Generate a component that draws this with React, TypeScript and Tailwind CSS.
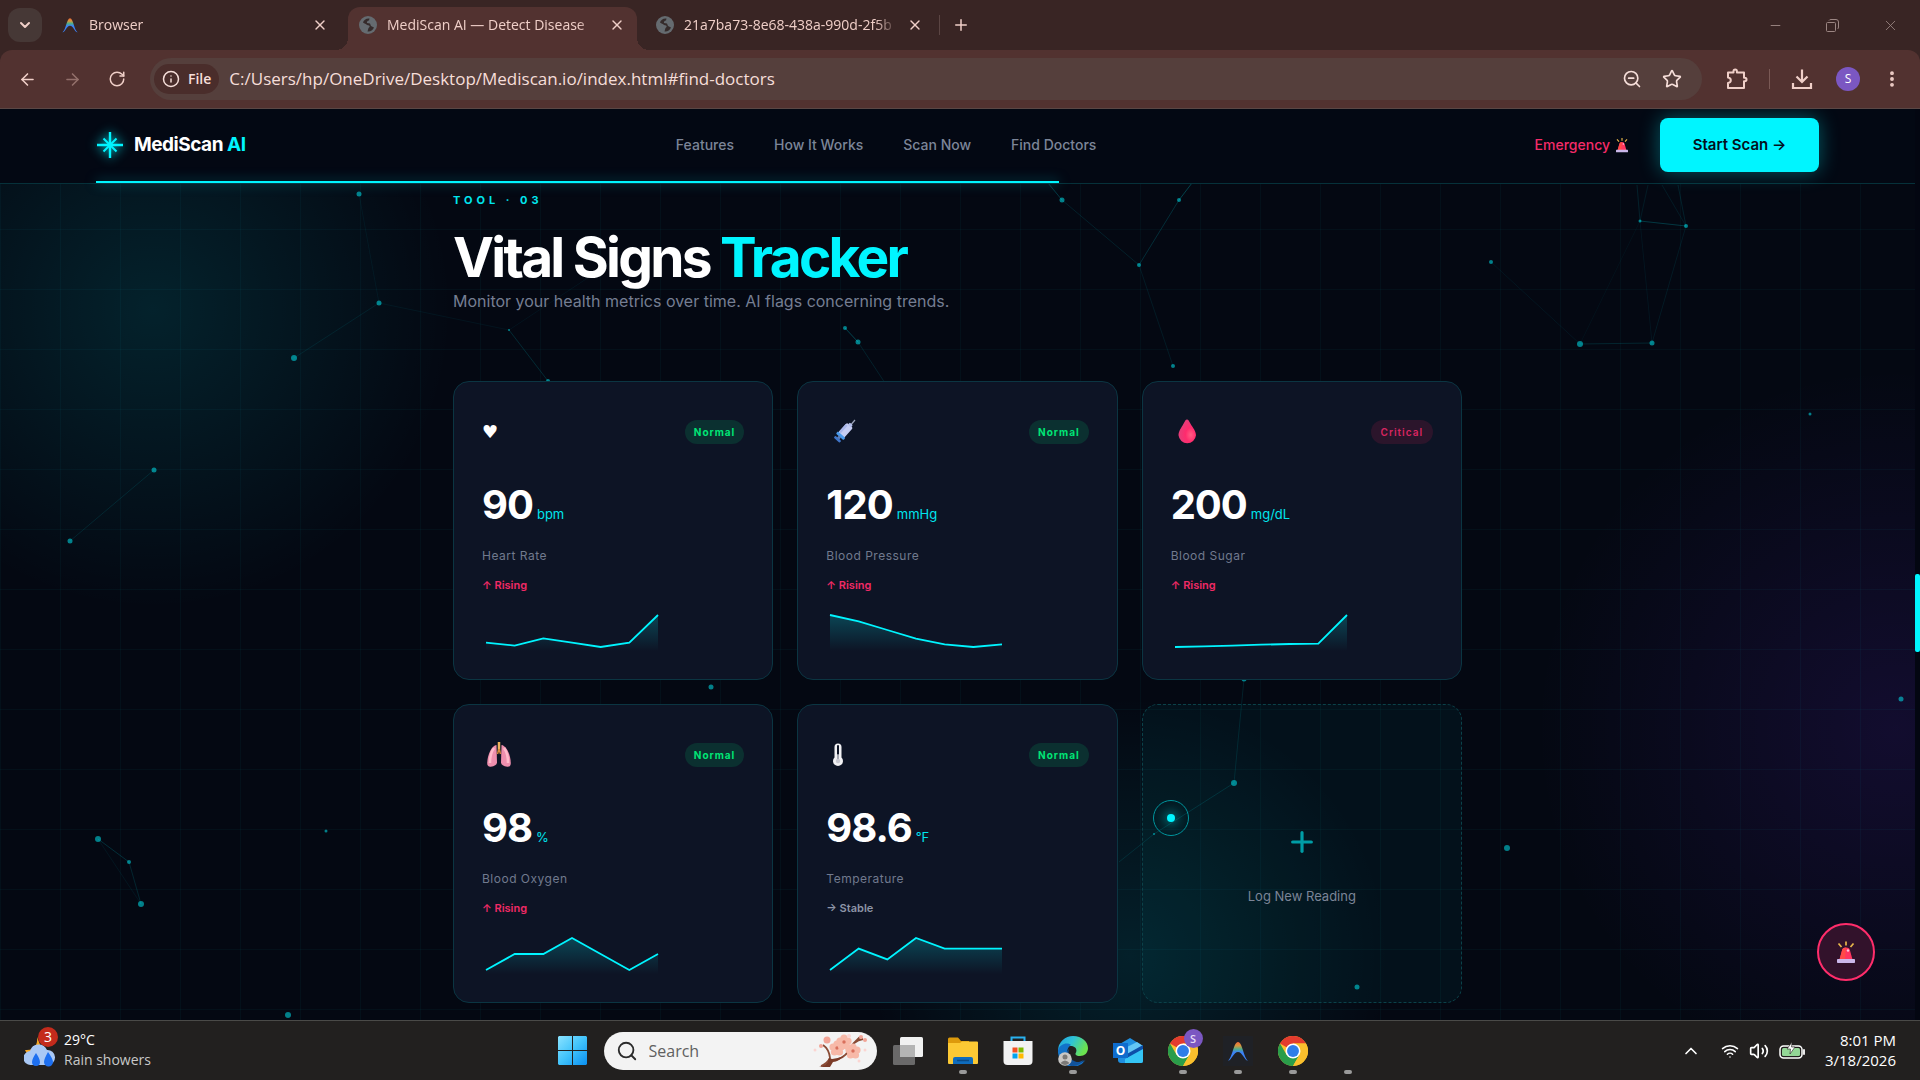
import type { ReactNode } from 'react';
import {
  ArrowLeft,
  ArrowRight,
  ChevronDown,
  ChevronUp,
  Info,
  Minus,
  MoreVertical,
  Plus,
  RotateCw,
  Search,
  Star,
  Volume2,
  Wifi,
  X,
  ZoomOut,
} from 'lucide-react';

type Vital = {
  icon: ReactNode;
  status: 'Normal' | 'Critical';
  value: string;
  unit: string;
  label: string;
  trend: 'Rising' | 'Stable';
  points: number[];
};

// x, y, radius
const PARTICLES: [number, number, number][] = [
  [359, 85, 2.5], [379, 194, 2.5], [294, 249, 3], [154, 361, 2.5], [70, 432, 2.5],
  [98, 730, 3], [129, 753, 2], [141, 795, 3], [326, 722, 1.5], [288, 906, 3],
  [509, 221, 1], [548, 272, 2], [845, 219, 2], [858, 233, 2.5], [711, 578, 2.5],
  [1062, 91, 2.5], [1139, 156, 2], [1179, 91, 2], [1173, 257, 2], [1491, 153, 2],
  [1580, 235, 3], [1652, 234, 2.5], [1686, 117, 2], [1640, 112, 1.5], [1810, 305, 1.5],
  [1901, 590, 2.5], [1507, 739, 3], [1244, 570, 2.5], [1234, 674, 3], [1357, 878, 2.5],
  [1154, 725, 1], [630, 141, 2],
];

const LINKS: [number, number, number, number, number][] = [
  [359, 85, 379, 194, 0.05], [379, 194, 294, 249, 0.08], [379, 194, 509, 221, 0.05],
  [154, 361, 70, 432, 0.1], [98, 730, 129, 753, 0.16], [129, 753, 141, 795, 0.12],
  [98, 730, 141, 795, 0.06], [509, 221, 548, 272, 0.14], [509, 221, 630, 141, 0.05],
  [845, 219, 858, 233, 0.25], [858, 233, 885, 274, 0.1], [1062, 91, 1139, 156, 0.1],
  [1179, 91, 1139, 156, 0.16], [1062, 91, 1048, 74, 0.2], [1179, 91, 1192, 74, 0.24],
  [1139, 156, 1173, 257, 0.08], [1580, 235, 1652, 234, 0.12], [1491, 153, 1580, 235, 0.06],
  [1652, 234, 1686, 117, 0.08], [1652, 234, 1640, 112, 0.06], [1580, 235, 1640, 112, 0.04],
  [1640, 112, 1686, 117, 0.2], [1686, 117, 1678, 76, 0.1], [1686, 117, 1662, 76, 0.08],
  [1640, 112, 1637, 76, 0.1], [1640, 112, 1648, 76, 0.08], [1244, 570, 1234, 674, 0.1],
  [1234, 674, 1154, 725, 0.12], [1154, 725, 1119, 753, 0.1],
];

function SirenIcon({ className }: { className?: string }) {
  return (
    <svg className={className} viewBox="0 0 24 24" fill="none" aria-hidden="true">
      <path d="M12 1.500v4M4.500 3.500l3 3.500M19.500 3.500l-3 3.500" stroke="#e9b84b" strokeWidth="1.700" />
      <path d="M8 10.500q.3-3 4-3t4 3l2.500 9h-13z" fill="#ff3560" />
      <path d="M8 10.500q.3-3 4-3l-1 12H5.500z" fill="#ff4a48" />
      <circle cx="14" cy="10.500" r="1.200" fill="#ffc9dd" />
      <rect x="3" y="19" width="18" height="4" rx=".8" fill="#cbb7ea" />
    </svg>
  );
}

function SyringeIcon() {
  return (
    <svg className="ml-1 size-7" viewBox="0 0 28 28" aria-hidden="true">
      <path d="M19 9l6-7" stroke="#9aa3b8" strokeWidth="1.200" />
      <g transform="rotate(42 14 14)">
        <rect x="10" y="5" width="8" height="14" rx="1.500" fill="#c5cdf3" />
        <rect x="12" y="3" width="4" height="3" rx="1" fill="#b4bfea" />
        <rect x="10" y="7" width="2.500" height="10" fill="#a9b6ea" />
        <rect x="9" y="17.500" width="10" height="3" rx="1" fill="#4a9bec" />
        <rect x="12.500" y="20" width="3" height="3" fill="#5f7fb8" />
        <rect x="10" y="22.500" width="8" height="2.500" rx="1" fill="#3f75c8" />
      </g>
    </svg>
  );
}

function DropIcon() {
  return (
    <svg className="ml-1 size-7" viewBox="0 0 28 28" aria-hidden="true">
      <defs>
        <radialGradient id="drop" cx=".7" cy=".65" r=".6">
          <stop offset="0" stopColor="#ff5c83" />
          <stop offset=".5" stopColor="#ff2b6d" />
          <stop offset="1" stopColor="#e93a78" />
        </radialGradient>
      </defs>
      <path d="M12 1.500c1.300 0 2 1.500 3.500 4.200C17.700 9.500 21 13 21 17.300a8.800 8.800 0 0 1-17.500 0c0-4.300 3-7.800 5-11.600C10 3 10.700 1.500 12 1.500z" fill="url(#drop)" />
    </svg>
  );
}

function LungsIcon() {
  return (
    <svg className="ml-1 size-7" viewBox="0 0 28 28" aria-hidden="true">
      <path d="M10.500 4C6 4.500 1.500 13 1.200 22q0 4 3.500 3.800 5.800-1 6.300-4z" fill="#ef8fae" />
      <path d="M15.500 4C20 4.500 24.500 13 24.800 22q0 4-3.500 3.800-5.800-1-6.300-4z" fill="#ef8fae" />
      <path d="M8 7C5 11 4 17 4 22M18 7c3 4 4 10 4 15" stroke="#ffbccb" strokeWidth="2.500" fill="none" />
      <path d="M13 1v10" stroke="#f0b45c" strokeWidth="2.500" />
      <path d="M13 8l-1.500 5m1.500-5l1.500 5" stroke="#d98a3a" strokeWidth="1.500" />
    </svg>
  );
}

function ThermometerIcon() {
  return (
    <svg className="size-7" viewBox="0 0 28 28" aria-hidden="true">
      <path d="M8.500 6a3.500 3.500 0 0 1 7 0v10.500a5 5 0 1 1-7 0z" fill="#f1f1f4" />
      <path d="M12 5v8" stroke="#0d1425" strokeWidth="2" strokeLinecap="round" />
      <path d="M12 13v6" stroke="#8b8f9b" strokeWidth="1.500" />
      <circle cx="12" cy="20" r="2.200" fill="#c9cad2" />
    </svg>
  );
}

const VITALS: Vital[] = [
  {
    icon: <span className="font-['DejaVu_Sans',sans-serif] text-lg text-white">♥</span>,
    status: 'Normal', value: '90', unit: 'bpm', label: 'Heart Rate', trend: 'Rising',
    points: [31.6, 34.6, 27.3, 31.6, 36, 31.6, 4],
  },
  {
    icon: <SyringeIcon />,
    status: 'Normal', value: '120', unit: 'mmHg', label: 'Blood Pressure', trend: 'Rising',
    points: [4, 10.3, 19, 27.6, 33.3, 36, 33.3],
  },
  {
    icon: <DropIcon />,
    status: 'Critical', value: '200', unit: 'mg/dL', label: 'Blood Sugar', trend: 'Rising',
    points: [36, 35.4, 34.6, 33.7, 33, 32.6, 4],
  },
  {
    icon: <LungsIcon />,
    status: 'Normal', value: '98', unit: '%', label: 'Blood Oxygen', trend: 'Rising',
    points: [36, 20, 20, 4, 20, 36, 20],
  },
  {
    icon: <ThermometerIcon />,
    status: 'Normal', value: '98.6', unit: '°F', label: 'Temperature', trend: 'Stable',
    points: [36, 14.6, 25.4, 4, 14.6, 14.6, 14.6],
  },
];

function Sparkline({ points, id }: { points: number[]; id: string }) {
  const step = 172 / (points.length - 1);
  const line = points.map((y, i) => `${4 + i * step},${y}`).join(' ');
  return (
    <svg className="mt-4 block h-10 w-[180px]" viewBox="0 0 180 40" aria-hidden="true">
      <defs>
        <linearGradient id={id} x1="0" y1="0" x2="0" y2="1">
          <stop offset="0" stopColor="#00f5ff" stopOpacity=".22" />
          <stop offset="1" stopColor="#00f5ff" stopOpacity="0" />
        </linearGradient>
      </defs>
      <polygon points={`4,40 ${line} 176,40`} fill={`url(#${id})`} />
      <polyline points={line} fill="none" stroke="#00f5ff" strokeWidth="1.800" />
    </svg>
  );
}

function VitalCard({ vital, id }: { vital: Vital; id: string }) {
  return (
    <article className="rounded-2xl border border-[#0b3542] bg-[#0d1425] p-7">
      <div className="flex h-11 items-center justify-between">
        {vital.icon}
        <span
          className={
            vital.status === 'Normal'
              ? 'rounded-full bg-[#0b3030] px-[9px] text-[10px] leading-6 font-bold tracking-[1px] text-[#00e676]'
              : 'rounded-full bg-[#2b152b] px-[10px] text-[10px] leading-6 font-semibold tracking-[1px] text-[#d92561]'
          }
        >
          {vital.status}
        </span>
      </div>
      <p className="mt-[18px] flex h-[66px] items-center">
        <span className="flex items-baseline gap-1">
          <span className="text-[40px] leading-[66px] font-bold tracking-tight text-white">{vital.value}</span>
          <span className="text-[13px] text-[#00e5ee]">{vital.unit}</span>
        </span>
      </p>
      <p className="mt-2 text-xs leading-5 tracking-[0.5px] text-[#717a8e]">{vital.label}</p>
      <p
        className={
          vital.trend === 'Rising'
            ? 'mt-[9px] text-[11px] leading-5 font-semibold text-[#f02a66]'
            : 'mt-[9px] text-[11px] leading-5 font-semibold text-[#8d95a8]'
        }
      >
        {vital.trend === 'Rising' ? '↑' : '→'} {vital.trend}
      </p>
      <Sparkline points={vital.points} id={id} />
    </article>
  );
}

function ArcIcon({ className }: { className?: string }) {
  return (
    <svg className={className} viewBox="0 0 24 24" fill="none" aria-hidden="true">
      <defs>
        <linearGradient id="arc" x1="0" y1="0" x2="0" y2="1">
          <stop offset="0" stopColor="#ef6a3a" />
          <stop offset=".2" stopColor="#d8963c" />
          <stop offset=".38" stopColor="#4fae8a" />
          <stop offset=".55" stopColor="#3b82f6" />
          <stop offset="1" stopColor="#3b82f6" />
        </linearGradient>
      </defs>
      <path d="M2 21.500C6.500 19 7.500 3 12 3s5.500 16 10 18.500c-3 1-5.500-8.500-10-8.500S5 22.500 2 21.500z" fill="url(#arc)" />
    </svg>
  );
}

function GlobeIcon() {
  return (
    <svg className="size-[18px] shrink-0" viewBox="0 0 18 18" aria-hidden="true">
      <circle cx="9" cy="9" r="9" fill="#656b70" />
      <path d="M10.500 2.500c-3-.5-6 1.500-6.500 4 1.500 1.500 3 1 4 2.500l2 .5q1.500 1-.5 2.500l-1 3.500q4.500.5 6.500-4l-3-1.500-1-2.500-3-.5q-.5-2 2-2.500z" fill="#352b2b" />
    </svg>
  );
}

function ChromeIcon() {
  return (
    <svg className="size-[30px]" viewBox="0 0 48 48" aria-hidden="true">
      <circle cx="24" cy="24" r="24" fill="#fbc02d" />
      <path d="M24 24L3.200 12A24 24 0 0 1 44.800 12H24z" fill="#e33b2e" />
      <path d="M3.200 12A24 24 0 0 0 24 48l10.400-18L24 24 13.600 30z" fill="#2a9d4a" />
      <path d="M24 12h20.800A24 24 0 0 1 24 48l10.400-18z" fill="#fbc02d" />
      <circle cx="24" cy="24" r="12" fill="#fff" />
      <circle cx="24" cy="24" r="9.500" fill="#2f7de9" />
    </svg>
  );
}

function BrowserTab({ title, icon, className }: { title: string; icon: ReactNode; className: string }) {
  return (
    <div className={`flex items-center gap-[10px] ${className}`}>
      {icon}
      <span className="min-w-0 flex-1 mask-r-from-90% whitespace-nowrap">{title}</span>
      <button aria-label={`Close ${title}`}>
        <X className="size-4" />
      </button>
    </div>
  );
}

function BrowserChrome() {
  return (
    <div className="bg-[#392524] font-['Open_Sans','Noto_Sans',sans-serif] text-[#f0cfc8]">
      <div className="flex h-[50px] items-center text-sm">
        <button aria-label="Search tabs" className="ml-2 flex size-[34px] items-center justify-center rounded-xl bg-[#463836]">
          <ChevronDown className="size-4" strokeWidth={3} />
        </button>
        <BrowserTab title="Browser" icon={<ArcIcon className="size-[18px]" />} className="w-[306px] pr-5 pl-[19px]" />
        <BrowserTab
          title="MediScan AI — Detect Disease"
          icon={<GlobeIcon />}
          className="relative h-[43px] w-[289px] self-end rounded-t-xl bg-[#523230] pr-3 pb-[7px] pl-[11px] before:absolute before:bottom-0 before:-left-3 before:size-3 before:bg-[radial-gradient(circle_at_0_0,transparent_12px,#523230_12px)] after:absolute after:-right-3 after:bottom-0 after:size-3 after:bg-[radial-gradient(circle_at_100%_0,transparent_12px,#523230_12px)]"
        />
        <BrowserTab title="21a7ba73-8e68-438a-990d-2f5b" icon={<GlobeIcon />} className="w-[298px] pr-3 pl-[19px]" />
        <span className="ml-1 h-5 w-px bg-[#5b4543]" />
        <button aria-label="New tab" className="ml-3">
          <Plus className="size-[18px]" />
        </button>
        <div className="ml-auto flex items-center gap-[42px] pr-[21px] text-[#9c8683]">
          <button aria-label="Minimize"><Minus className="size-[15px]" strokeWidth={1.5} /></button>
          <button aria-label="Restore">
            <svg className="size-[15px]" viewBox="0 0 15 15" fill="none" stroke="currentColor">
              <rect x="1.500" y="4.500" width="9" height="9" rx="1" />
              <path d="M4 2.500q.5-1 2-1h5q2.500 0 2.500 2.500v5q0 1.500-1 2" />
            </svg>
          </button>
          <button aria-label="Close"><X className="size-[17px]" strokeWidth={1.2} /></button>
        </div>
      </div>

      <div className="flex h-[59px] items-center rounded-t-xl border-b border-[#5a4745] bg-[#523230] pl-[18px]">
        <button aria-label="Back"><ArrowLeft className="size-[19px]" /></button>
        <button aria-label="Forward" className="ml-[26px] text-[#93706b]"><ArrowRight className="size-[19px]" /></button>
        <button aria-label="Reload" className="ml-[26px]"><RotateCw className="size-[18px]" /></button>
        <div className="ml-6 flex h-[42px] flex-1 items-center rounded-full bg-[#553f3c] pl-1 text-[#f6ded9]">
          <span className="flex h-[30px] items-center gap-2 rounded-full bg-[#4a2d2b] px-2 text-sm font-semibold">
            <Info className="size-[18px]" /> File
          </span>
          <input
            aria-label="Address"
            readOnly
            value="C:/Users/hp/OneDrive/Desktop/Mediscan.io/index.html#find-doctors"
            className="ml-[10px] min-w-0 flex-1 bg-transparent text-[17px] outline-none"
          />
          <button aria-label="Zoom"><ZoomOut className="size-5" /></button>
          <button aria-label="Bookmark" className="mr-5 ml-5"><Star className="size-5" /></button>
        </div>
        <div className="flex items-center pr-[18px] pl-6">
          <button aria-label="Extensions">
            <svg className="size-[22px]" viewBox="0 0 22 22" fill="none" stroke="currentColor" strokeWidth="2" strokeLinejoin="round" aria-hidden="true">
              <path d="M2 4.500h5.500V3.200a1.700 1.700 0 0 1 3.400 0v1.300H18v5.300h.8a1.700 1.700 0 0 1 0 3.400H18V20H2v-5q2.800-.3 2.800-2.700T2 9.500z" />
            </svg>
          </button>
          <span className="mx-[21px] h-5 w-px bg-[#7a5955]" />
          <button aria-label="Downloads">
            <svg className="size-[22px]" viewBox="0 0 22 22" fill="none" stroke="currentColor" strokeWidth="2.200" aria-hidden="true">
              <path d="M11 1.500v12M5.500 8.500L11 14l5.500-5.500M2 15v5h18v-5" />
            </svg>
          </button>
          <button aria-label="Profile" className="ml-[23px] size-6 rounded-full bg-[#7b57c2] text-xs text-white">S</button>
          <button aria-label="Menu" className="ml-[22px]"><MoreVertical className="size-5" strokeWidth={2.6} /></button>
        </div>
      </div>
    </div>
  );
}

function SiteNav() {
  return (
    <header className="relative flex h-[75px] items-center justify-between border-b border-[#06313a] bg-[#030813] px-24 pb-[2px]">
      <a href="#home" className="flex items-center gap-[10px] text-[19px] font-bold tracking-tight text-white">
        <svg className="size-7 drop-shadow-[0_0_6px_#00f5ff]" viewBox="0 0 28 28" stroke="#00f5ff" strokeWidth="2.400" aria-hidden="true">
          <path d="M14 1v26M1 14h26" />
          <path d="M7.500 7.500l13 13M20.500 7.500l-13 13" strokeWidth="2" />
        </svg>
        <span>
          MediScan <span className="text-[#00f5ff]">AI</span>
        </span>
      </a>
      <nav className="mr-2 flex gap-10 text-sm font-medium text-[#7c8598]">
        <a href="#features">Features</a>
        <a href="#how">How It Works</a>
        <a href="#scan">Scan Now</a>
        <a href="#find-doctors">Find Doctors</a>
      </nav>
      <div className="flex items-center gap-[30px]">
        <a href="#emergency" className="flex items-center gap-1 text-sm font-medium text-[#f52b68]">
          Emergency <SirenIcon className="size-4" />
        </a>
        <button className="h-[54px] w-[159px] rounded-lg bg-[#00f5ff] text-[15px] font-semibold text-[#03101c] shadow-[0_0_20px_rgba(0,245,255,0.35)]">
          Start Scan →
        </button>
      </div>
      <span className="absolute bottom-0 left-24 h-[2px] w-[963px] bg-[#00f5ff] shadow-[0_0_12px_rgba(0,245,255,0.5)]" />
    </header>
  );
}

function WeatherIcon() {
  return (
    <svg className="size-8" viewBox="0 0 32 32" aria-hidden="true">
      <path d="M13 2c1 8-3 14-12 13 3 8 14 9 18 2z" fill="#f5a623" />
      <path d="M7 30a7 7 0 0 1-1-14 9 9 0 0 1 17-1 7.500 7.500 0 0 1 1 15z" fill="#a9c8f5" />
      <path d="M12 18q4 6 4 9a4 4 0 0 1-8 0q0-3 4-9zM24 17q5 7 5 10a4.500 4.500 0 0 1-9 0q0-3 4-10z" fill="#1d6ff0" />
    </svg>
  );
}

function BlossomIcon() {
  const flowers = [[24, 15], [40, 18], [31, 9]];
  return (
    <svg className="h-9 w-[58px]" viewBox="0 0 58 36" fill="none" aria-hidden="true">
      <path d="M8 33q6-2 9-8-1-9-7-13M16 27q14 1 20-10 4-9 14-11M40 11l7-7" stroke="#8a4b35" strokeWidth="1.800" />
      <path d="M6 34q9-1 10-9l3 1q9-1 12-4-5 7-11 7l-3 5z" fill="#7b3b28" />
      {flowers.map(([x, y]) => (
        <g key={x} fill="#f7b9a8">
          <circle cx={x} cy={y - 4} r="3.600" />
          <circle cx={x + 4} cy={y - 1} r="3.600" />
          <circle cx={x + 2.5} cy={y + 4} r="3.600" />
          <circle cx={x - 2.5} cy={y + 4} r="3.600" />
          <circle cx={x - 4} cy={y - 1} r="3.600" />
          <circle cx={x} cy={y} r="1.700" fill="#d9705c" />
        </g>
      ))}
      <g fill="#f2a496">
        <circle cx="14" cy="7" r="3.500" />
        <circle cx="8" cy="13" r="2" />
        <circle cx="48" cy="4" r="2" />
        <circle cx="52" cy="7" r="2" />
      </g>
      <g fill="#fbd5d2">
        <circle cx="2" cy="17" r="1.500" />
        <circle cx="36" cy="3" r="2" />
        <circle cx="52" cy="17" r="1.500" />
        <circle cx="46" cy="28" r="1.500" />
      </g>
    </svg>
  );
}

function TaskbarApp({ label, running, children }: { label: string; running?: boolean; children?: ReactNode }) {
  return (
    <button aria-label={label} className="relative flex h-[59px] w-[55px] items-center justify-center">
      {children}
      {running && <span className="absolute bottom-[6px] h-1 w-2 rounded-full bg-[#9a9a9a]" />}
    </button>
  );
}

function Taskbar() {
  return (
    <footer className="grid h-[60px] grid-cols-[1fr_auto_1fr] items-center border-t border-[#4a4a48] bg-[#22201f] font-['Open_Sans','Noto_Sans',sans-serif] text-sm text-white">
      <div className="flex items-center gap-2 pl-6">
        <div className="relative">
          <WeatherIcon />
          <span className="absolute -top-2 left-[14px] size-5 rounded-full bg-[#c42b1c] text-center leading-5">3</span>
        </div>
        <div className="pb-[2px] leading-5">
          <p>29°C</p>
          <p className="text-[#c8c8c8]">Rain showers</p>
        </div>
      </div>

      <div className="flex items-center">
        <TaskbarApp label="Start">
          <svg className="size-[29px]" viewBox="0 0 29 29" aria-hidden="true">
            <defs>
              <linearGradient id="win" x1="0" y1="0" x2="1" y2="1">
                <stop offset="0" stopColor="#8be3ff" />
                <stop offset=".5" stopColor="#41c3fb" />
                <stop offset="1" stopColor="#0a8ff0" />
              </linearGradient>
            </defs>
            <path d="M1 0h13v14H0V1zM15 0h13l1 1v13H15zM0 15h14v14H1l-1-1zM15 15h14v13l-1 1H15z" fill="url(#win)" />
          </svg>
        </TaskbarApp>
        <label className="mx-1 flex h-[38px] w-[273px] items-center rounded-full bg-[#f3f3f3] pr-[6px] pl-3 text-[#606060]">
          <Search className="size-[22px] text-[#2b2b2b]" />
          <input
            aria-label="Search"
            placeholder="Search"
            className="ml-[11px] min-w-0 flex-1 bg-transparent text-base outline-none placeholder:text-[#606060]"
          />
          <BlossomIcon />
        </label>
        <TaskbarApp label="Task view">
          <svg className="size-[30px]" viewBox="0 0 30 30" aria-hidden="true">
            <rect x="7" y="1" width="23" height="20" rx="1.500" fill="#f1f1f1" />
            <rect x="0" y="9" width="22" height="20" rx="1.500" fill="#777" fillOpacity=".85" />
            <rect x="7" y="9" width="15" height="12" fill="#b4b4b4" />
          </svg>
        </TaskbarApp>
        <TaskbarApp label="File Explorer" running>
          <svg className="size-[30px]" viewBox="0 0 30 30" aria-hidden="true">
            <path d="M0 3q0-1.500 1.500-1.500H10L13 5h8v6H0z" fill="#dd9a0c" />
            <path d="M0 7h12l2-1.500h15q1 0 1 1V27q0 1-1 1H1q-1 0-1-1z" fill="#fcc934" />
            <path d="M5 28v-5q0-2 2-2h16q2 0 2 2v5z" fill="#0f6cbd" />
            <path d="M9 24.500h12" stroke="#0a4a86" strokeWidth="1.500" />
          </svg>
        </TaskbarApp>
        <TaskbarApp label="Store">
          <svg className="size-[30px]" viewBox="0 0 30 30" aria-hidden="true">
            <path d="M8.500 6V1.500h13V6" stroke="#29b1ef" strokeWidth="2" fill="none" />
            <path d="M.5 5h29v20q0 4-4 4h-21q-4 0-4-4z" fill="#f2f2f2" />
            <path d="M9.500 11.500h5v5h-5z" fill="#f25022" />
            <path d="M15.500 11.500h5v5h-5z" fill="#7fba00" />
            <path d="M9.500 17.500h5v5h-5z" fill="#00a4ef" />
            <path d="M15.500 17.500h5v5h-5z" fill="#ffb900" />
          </svg>
        </TaskbarApp>
        <TaskbarApp label="Edge" running>
          <svg className="size-[30px]" viewBox="0 0 30 30" aria-hidden="true">
            <defs>
              <linearGradient id="edge" x1="0" y1="0" x2="1" y2=".4">
                <stop offset="0" stopColor="#1f9fe0" />
                <stop offset=".5" stopColor="#2fc3d6" />
                <stop offset="1" stopColor="#6be34f" />
              </linearGradient>
            </defs>
            <path d="M0 14a15 15 0 0 1 15-14c9 0 15 6 15 12 0 5-3.500 8-8 8-3 0-5-1-4.500-2.500C20 13 17 10 12.500 10 6 10 0 14 0 20z" fill="url(#edge)" />
            <path d="M0 14c2-6 9-8 13-5-5 3-6 12 2 17 4 2.500 9 1 12.500-2A15 15 0 0 1 0 16z" fill="#1272c9" />
            <path d="M11 13c-2 6 2 13 10 13l5-2a15 15 0 0 1-13 6C6 26 6 18 11 13z" fill="#11529b" />
            <circle cx="7" cy="23" r="6.800" fill="#c9c7c5" />
            <circle cx="7" cy="21" r="2.500" fill="#7b7977" />
            <path d="M2.500 27q4.500-5 9 0-4.500 4-9 0z" fill="#7b7977" />
          </svg>
        </TaskbarApp>
        <TaskbarApp label="Outlook">
          <span className="relative flex h-[30px] w-[30px] items-center">
            <svg className="size-[30px]" viewBox="0 0 30 30" aria-hidden="true">
              <path d="M5 9L17 2l13 8v15q0 2-2 2H8q-3 0-3-3z" fill="#1f8fe0" />
              <path d="M8 14L24 6l6 4-17 11z" fill="#63c6f5" />
              <path d="M12 19L30 9v5L15 23z" fill="#0d4fa8" />
              <path d="M12 23l18-10v12q0 2-2 2H12z" fill="#35c5f5" />
            </svg>
            <span className="absolute left-0 flex size-[15px] items-center justify-center bg-[#0f6ccd] text-xs font-bold">O</span>
          </span>
        </TaskbarApp>
        <TaskbarApp label="Chrome profile" running>
          <ChromeIcon />
          <span className="absolute top-2 right-2 size-[19px] rounded-full bg-[#7b57c2] text-[11px] leading-[19px] font-semibold text-[#e6dcf7]">S</span>
        </TaskbarApp>
        <TaskbarApp label="Browser" running>
          <span className="flex size-[30px] items-center justify-center bg-[#1f2126]">
            <ArcIcon className="size-6" />
          </span>
        </TaskbarApp>
        <TaskbarApp label="Chrome" running>
          <ChromeIcon />
        </TaskbarApp>
        <TaskbarApp label="Background app" running />
      </div>

      <div className="flex items-center justify-end pr-6">
        <ChevronUp className="size-5" />
        <Wifi className="ml-5 size-[18px]" />
        <Volume2 className="ml-[10px] size-5" />
        <svg className="ml-[10px] h-[18px] w-[26px]" viewBox="0 0 26 18" fill="none" aria-hidden="true">
          <rect x="1" y="4" width="22" height="12" rx="3.500" stroke="#fff" strokeWidth="1.500" />
          <rect x="3" y="6" width="18" height="8" rx="1.500" fill="#93d796" />
          <path d="M25 8v4" stroke="#fff" strokeWidth="1.800" strokeLinecap="round" />
          <path d="M13 0l-5 7h3.500l-.5 5 5-7h-3.500z" fill="#fff" stroke="#22201f" strokeWidth=".6" />
        </svg>
        <div className="ml-5 pb-[2px] text-right text-[15px] leading-5">
          <p>8:01 PM</p>
          <p>3/18/2026</p>
        </div>
      </div>
    </footer>
  );
}

function Backdrop() {
  return (
    <div className="absolute inset-0 bg-[radial-gradient(circle_at_8%_22%,rgba(0,245,255,0.11),transparent_300px),radial-gradient(circle_at_99%_68%,rgba(123,47,255,0.12),transparent_360px),radial-gradient(circle_at_59%_93%,rgba(0,245,255,0.1),transparent_260px)]">
      <div className="absolute inset-0 bg-[linear-gradient(rgba(0,245,255,0.035)_1px,transparent_1px),linear-gradient(90deg,rgba(0,245,255,0.035)_1px,transparent_1px)] bg-size-[60px_60px]" />
      <svg className="absolute inset-0 size-full" aria-hidden="true">
        {LINKS.map(([x1, y1, x2, y2, opacity], i) => (
          <line key={i} x1={x1} y1={y1} x2={x2} y2={y2} stroke="#00f5ff" strokeOpacity={opacity} />
        ))}
        {PARTICLES.map(([cx, cy, r], i) => (
          <circle key={i} cx={cx} cy={cy} r={r} fill="#00f5ff" fillOpacity="0.5" />
        ))}
      </svg>
    </div>
  );
}

function App() {
  return (
    <div className="flex min-h-screen flex-col bg-[#040812]">
      <BrowserChrome />

      <div className="flex flex-1 font-['Inter','Noto_Sans',sans-serif]">
        <div className="relative flex-1 overflow-hidden">
          <Backdrop />
          <div className="relative">
            <SiteNav />
            <main className="mx-auto max-w-[1009px] pt-[6px] pb-4">
              <p className="text-[11px] leading-5 font-bold tracking-[4px] text-[#00e5ee]">TOOL · 03</p>
              <h1 className="mt-4 text-[55px] leading-[62px] font-bold tracking-tighter text-white">
                Vital Signs <span className="text-[#00f5ff]">Tracker</span>
              </h1>
              <p className="text-base leading-[27px] text-[#757e92]">
                Monitor your health metrics over time. AI flags concerning trends.
              </p>
              <section className="mt-[66px] grid grid-cols-3 gap-6">
                {VITALS.map((vital, i) => (
                  <VitalCard key={vital.label} vital={vital} id={`spark-${i}`} />
                ))}
                <button className="flex flex-col items-center justify-center gap-7 rounded-2xl border border-dashed border-[#0b4149] bg-[#00f5ff]/4 pt-6 text-[#7b8497]">
                  <Plus className="size-8 text-[#009da6]" strokeWidth={2.4} />
                  <span className="text-[13px] leading-5">Log New Reading</span>
                </button>
              </section>
            </main>
          </div>

          {/* custom cursor */}
          <div className="absolute top-[691px] left-[1153px] flex size-9 items-center justify-center rounded-full border border-[#00959d]">
            <span className="size-2 rounded-full bg-[#00f5ff] shadow-[0_0_12px_#00f5ff]" />
          </div>

          <button
            aria-label="Emergency"
            className="absolute right-10 bottom-[39px] flex size-[58px] items-center justify-center rounded-full border-2 border-[#ff2d6b] bg-[#32122b]"
          >
            <SirenIcon className="size-6" />
          </button>
        </div>

        {/* page scrollbar */}
        <div className="relative w-[5px] bg-[#030611]">
          <span className="absolute top-[51%] h-[78px] w-full rounded-xs bg-[#00f5ff]" />
        </div>
      </div>

      <Taskbar />
    </div>
  );
}

export default App;
